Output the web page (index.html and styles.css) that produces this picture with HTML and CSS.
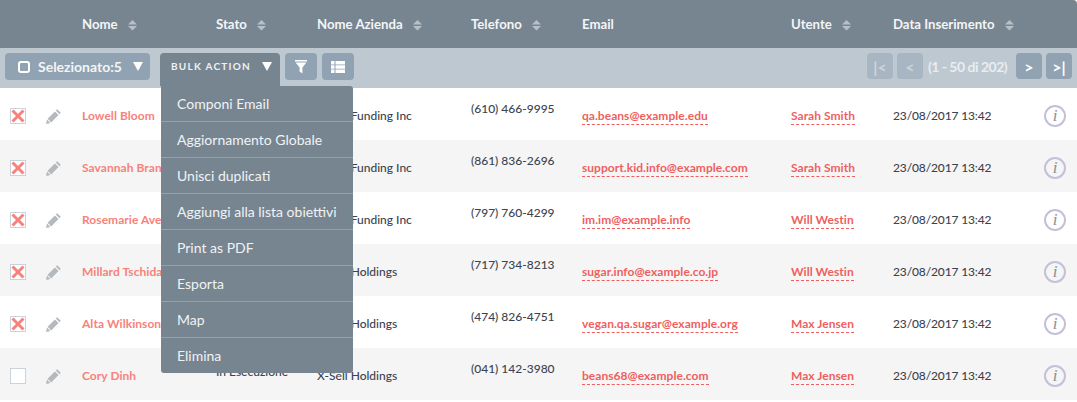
FILE: index.html
```html
<!DOCTYPE html>
<html lang="it">
<head>
<meta charset="utf-8">
<title>Lista</title>
<link rel="stylesheet" href="styles.css">
</head>
<body>
<svg class="defs" width="0" height="0" aria-hidden="true">
  <symbol id="sort" viewBox="0 0 9 11"><path class="up" d="M4.5 0 9 4.6H0Z"/><path class="down" d="M0 6H9L4.5 10.6Z"/></symbol>
  <symbol id="x" viewBox="0 0 14 14"><path d="M1.5 1.5 12.5 12.5M12.5 1.5 1.5 12.5" fill="none" stroke="#f7827b" stroke-width="3"/></symbol>
  <symbol id="pencil" viewBox="0 0 16 16"><path d="M11.2 1.2 14.8 4.8 13.4 6.2 9.8 2.6ZM8.9 3.5 12.5 7.1 5.2 14.4 1.6 10.8ZM1 11.6 4.4 15 0 16Z" fill="#b4b9bd"/></symbol>
</svg>
<main class="list">
  <div class="grid head">
    <span></span><span></span>
    <span class="th">Nome <svg class="sort"><use href="#sort"/></svg></span>
    <span class="th">Stato <svg class="sort"><use href="#sort"/></svg></span>
    <span class="th">Nome Azienda <svg class="sort active"><use href="#sort"/></svg></span>
    <span class="th">Telefono <svg class="sort"><use href="#sort"/></svg></span>
    <span class="th">Email</span>
    <span class="th">Utente <svg class="sort"><use href="#sort"/></svg></span>
    <span class="th">Data Inserimento <svg class="sort"><use href="#sort"/></svg></span>
  </div>
  <div class="toolbar">
    <button class="btn select"><span class="box"></span><span>Selezionato:5</span><span class="tri"></span></button>
    <div class="bulk">
      <button class="bulk-btn"><span>BULK ACTION</span><span class="tri"></span></button>
      <ul class="menu">
        <li>Componi Email</li>
        <li>Aggiornamento Globale</li>
        <li>Unisci duplicati</li>
        <li>Aggiungi alla lista obiettivi</li>
        <li>Print as PDF</li>
        <li>Esporta</li>
        <li>Map</li>
        <li>Elimina</li>
      </ul>
    </div>
    <button class="btn icon">
      <svg width="12" height="14" viewBox="0 0 12 14"><path d="M0 0H12V1.6H0ZM0.6 2.6H11.4L7.4 7.6V13.4L4.6 11.4V7.6Z" fill="#fff"/></svg>
    </button>
    <button class="btn icon">
      <svg width="14" height="12" viewBox="0 0 14 12"><path d="M0 0H3.5V3.4H0ZM4.5 0H14V3.4H4.5ZM0 4.3H3.5V7.7H0ZM4.5 4.3H14V7.7H4.5ZM0 8.6H3.5V12H0ZM4.5 8.6H14V12H4.5Z" fill="#fff"/></svg>
    </button>
    <div class="pager">
      <button class="btn page off">|&lt;</button>
      <button class="btn page off">&lt;</button>
      <span class="count">(1 - 50 di 202)</span>
      <button class="btn page">&gt;</button>
      <button class="btn page">&gt;|</button>
    </div>
  </div>

  <div class="grid row">
    <span class="check"><svg width="14" height="14"><use href="#x"/></svg></span>
    <svg class="edit"><use href="#pencil"/></svg>
    <a class="name">Lowell Bloom</a><span></span><span>X-Sell Funding Inc</span><span class="high">(610) 466-9995</span>
    <span><a class="link">qa.beans@example.edu</a></span><span><a class="link">Sarah Smith</a></span><span class="date">23/08/2017 13:42</span><span class="info">i</span>
  </div>
  <div class="grid row alt">
    <span class="check"><svg width="14" height="14"><use href="#x"/></svg></span>
    <svg class="edit"><use href="#pencil"/></svg>
    <a class="name">Savannah Branch</a><span></span><span>X-Sell Funding Inc</span><span class="high">(861) 836-2696</span>
    <span><a class="link">support.kid.info@example.com</a></span><span><a class="link">Sarah Smith</a></span><span class="date">23/08/2017 13:42</span><span class="info">i</span>
  </div>
  <div class="grid row">
    <span class="check"><svg width="14" height="14"><use href="#x"/></svg></span>
    <svg class="edit"><use href="#pencil"/></svg>
    <a class="name">Rosemarie Avery</a><span></span><span>X-Sell Funding Inc</span><span class="high">(797) 760-4299</span>
    <span><a class="link">im.im@example.info</a></span><span><a class="link">Will Westin</a></span><span class="date">23/08/2017 13:42</span><span class="info">i</span>
  </div>
  <div class="grid row alt">
    <span class="check"><svg width="14" height="14"><use href="#x"/></svg></span>
    <svg class="edit"><use href="#pencil"/></svg>
    <a class="name">Millard Tschida</a><span></span><span>X-Sell Holdings</span><span class="high">(717) 734-8213</span>
    <span><a class="link">sugar.info@example.co.jp</a></span><span><a class="link">Will Westin</a></span><span class="date">23/08/2017 13:42</span><span class="info">i</span>
  </div>
  <div class="grid row">
    <span class="check"><svg width="14" height="14"><use href="#x"/></svg></span>
    <svg class="edit"><use href="#pencil"/></svg>
    <a class="name">Alta Wilkinson</a><span></span><span>X-Sell Holdings</span><span class="high">(474) 826-4751</span>
    <span><a class="link">vegan.qa.sugar@example.org</a></span><span><a class="link">Max Jensen</a></span><span class="date">23/08/2017 13:42</span><span class="info">i</span>
  </div>
  <div class="grid row alt">
    <span class="check"></span>
    <svg class="edit"><use href="#pencil"/></svg>
    <a class="name">Cory Dinh</a><span class="status">In Esecuzione</span><span>X-Sell Holdings</span><span class="high">(041) 142-3980</span>
    <span><a class="link">beans68@example.com</a></span><span><a class="link">Max Jensen</a></span><span class="date">23/08/2017 13:42</span><span class="info">i</span>
  </div>
</main>
</body>
</html>
```
FILE: styles.css
```css
* { box-sizing: border-box; }
html, body { margin: 0; padding: 0; }
body { height: 402px; overflow: hidden; background: #fff; font-family: Lato, "Open Sans", sans-serif; color: #3c4350; }
.defs { position: absolute; }
.list { width: 1077px; }
.grid { display: grid; grid-template-columns: 35px 37px 134px 101px 154px 111px 209px 102px 150px 1fr; padding-left: 10px; align-items: center; }
.head { height: 48px; background: #778591; color: #f3f5f7; font-size: 13.2px; font-weight: 700; border-top-right-radius: 4px; }
.th { white-space: nowrap; padding-bottom: 1px; }
.sort { width: 9px; height: 11px; margin-left: 7px; vertical-align: -2px; fill: #b8c0c7; }
.sort .up, .sort .down { fill: inherit; }
.sort.active .down { fill: #fff; }
.toolbar { height: 40px; background: #bdc8d1; display: flex; align-items: flex-start; padding: 5px 5px 0 5px; position: relative; }
button { font-family: inherit; border: 0; padding: 0; margin: 0; color: #fff; }
.btn { height: 27px; background: #91a2b3; border-radius: 4px; display: flex; align-items: center; justify-content: center; }
.select { width: 145px; font-size: 14px; font-weight: 700; color: #f3f5f7; justify-content: flex-start; padding-left: 13px; }
.box { width: 12px; height: 12px; border: 2px solid #fff; border-radius: 3px; margin-right: 8px; }
.tri { width: 0; height: 0; border-left: 5px solid transparent; border-right: 5px solid transparent; border-top: 9px solid #fff; }
.select .tri { margin-left: 11px; }
.bulk { position: relative; margin-left: 10px; }
.bulk-btn { width: 120px; height: 33px; background: #778591; border-radius: 4px 4px 0 0; font-size: 10px; font-weight: 700; letter-spacing: 1.25px; display: flex; align-items: center; padding: 0 0 8px 11px; color: #eef1f3; }
.bulk-btn .tri { margin: 2px 0 0 11px; }
.menu { position: absolute; z-index: 5; left: 1px; top: 33px; width: 192px; height: 287px; margin: 0; padding: 0; list-style: none; background: #778591; border-radius: 0 3px 3px 3px; color: #f0f3f5; font-size: 14px; }
.menu li { height: 36px; line-height: 35px; padding-left: 16px; border-bottom: 1px solid #94a0ab; white-space: nowrap; }
.menu li:last-child { border-bottom: 0; }
.icon { width: 32px; margin-left: 5px; }
.pager { margin-left: auto; display: flex; align-items: center; font-size: 13px; font-weight: 700; height: 26px; }
.page { width: 26px; height: 26px; font-size: 16px; font-weight: 700; margin-left: 4px; }
.page.off { background: #a8b6c3; color: #cdd5dc; }
.count { color: #e9edf1; width: 89px; text-align: center; font-size: 14px; letter-spacing: -0.5px; }
.row { height: 52px; padding-top: 2px; font-size: 12px; font-weight: 500; color: #3c4350; white-space: nowrap; }
.alt { background: #f5f5f5; }
.check { width: 16px; height: 16px; margin-top: 2px; border: 1px solid #c9d3db; background: #fff; display: flex; align-items: center; justify-content: center; }
.edit { width: 16px; height: 16px; margin: 2px 0 0 1px; }
.name { color: #f7827b; font-weight: 700; letter-spacing: 0.05px; }
.high { padding-bottom: 13px; }
.status { padding-bottom: 8px; }
.date { letter-spacing: -0.13px; }
.link { color: #ef5f5f; border-bottom: 1px dashed #ef5f5f; padding-bottom: 1px; font-weight: 700; letter-spacing: 0.04px; }
.info { width: 22px; height: 22px; margin: 1px 0 0 1px; border: 2px solid #c4c0d8; border-radius: 50%; display: flex; align-items: center; justify-content: center; color: #8d8d98; font-family: "Liberation Serif", serif; font-style: italic; font-size: 17px; }
```
